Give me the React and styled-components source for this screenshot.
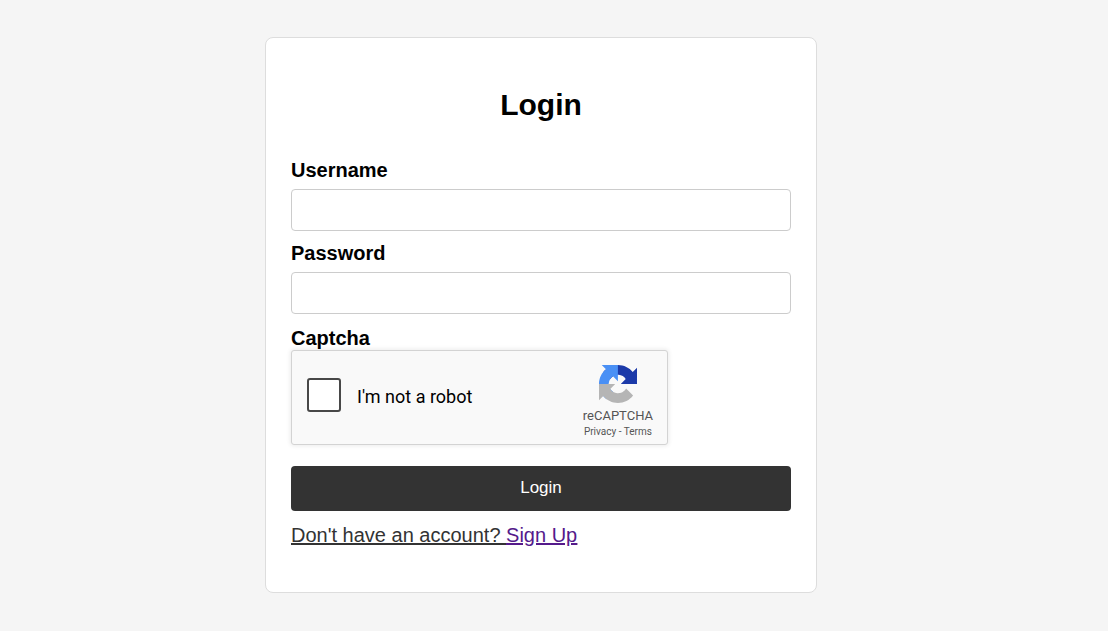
import React from "react";
import styled, { createGlobalStyle } from "styled-components";

const GlobalStyle = createGlobalStyle`
  *, *::before, *::after { box-sizing: border-box; }
  body {
    margin: 0;
    background: #f5f5f5;
    color: #000;
    font-family: Arial, "Liberation Sans", sans-serif;
    font-size: 20px;
    line-height: 24px;
  }
`;

const Page = styled.main`
  display: flex;
  align-items: center;
  justify-content: center;
  min-height: 100vh;
  padding: 24px 26px 26px 0;
`;

const Card = styled.form`
  width: 100%;
  max-width: 552px;
  padding: 25px 25px 45px;
  background: #fff;
  border: 1px solid #ddd;
  border-radius: 8px;
`;

const Title = styled.h1`
  margin: 24px 0 35px;
  font-size: 30px;
  line-height: 36px;
  text-align: center;
`;

const Field = styled.div`
  display: flex;
  flex-direction: column;
  gap: 7px;
  margin-bottom: 10px;
`;

const CaptchaField = styled.div`
  margin: 12px 0 21px;
`;

const Label = styled.label`
  display: block;
  font-weight: bold;
`;

const TextInput = styled.input`
  width: 100%;
  height: 42px;
  padding: 8px 10px;
  background: #fff;
  border: 1px solid #ccc;
  border-radius: 4px;
  font: inherit;
`;

const Captcha = styled.div`
  display: flex;
  align-items: stretch;
  justify-content: space-between;
  max-width: 377px;
  height: 95px;
  padding: 0 14px 0 15px;
  background: #f9f9f9;
  border: 1px solid #d3d3d3;
  border-radius: 3px;
  box-shadow: 0 0 4px 1px rgba(0, 0, 0, 0.08);
  font-family: Roboto, sans-serif;
`;

const CaptchaCheck = styled.div`
  display: flex;
  align-items: center;
  gap: 16px;
`;

const CheckBox = styled.input`
  appearance: none;
  width: 34px;
  height: 34px;
  margin: 0 0 4px;
  background: #fff;
  border: 2px solid #484848;
  border-radius: 3px;
`;

const CheckLabel = styled.label`
  font-size: 18px;
`;

const CaptchaBrand = styled.div`
  display: flex;
  flex-direction: column;
  align-items: center;
  padding-top: 14px;
  color: #555;
  font-size: 13px;
  line-height: 16px;
`;

const BrandLogo = styled.svg`
  width: 38px;
  height: 38px;
  margin-bottom: 5px;
`;

const Legal = styled.div`
  font-size: 10px;
`;

const LegalLink = styled.a`
  color: inherit;
  text-decoration: none;
`;

const SubmitButton = styled.button`
  display: block;
  width: 100%;
  height: 45px;
  background: #333;
  border: 0;
  border-radius: 4px;
  color: #fff;
  font-family: inherit;
  font-size: 17px;
  cursor: pointer;
`;

const SignUpText = styled.p`
  margin: 12px 0 0;
  color: #333;
  text-decoration: underline;
`;

const SignUpLink = styled.a`
  color: #551a8b;
`;

function RecaptchaLogo() {
  return (
    <BrandLogo viewBox="0 0 64 64" aria-hidden="true">
      <path
        fill="#1c3aa9"
        d="M64 31.955l-.033-1.37V4.687l-7.16 7.16C50.948 4.674 42.033.093 32.05.093c-10.4 0-19.622 4.96-25.458 12.64l11.736 11.86a15.55 15.55 0 0 1 4.754-5.334c2.05-1.6 4.952-2.906 8.968-2.906.485 0 .86.057 1.135.163 4.976.393 9.288 3.14 11.828 7.124l-8.307 8.307L64 31.953"
      />
      <path
        fill="#4a90f5"
        d="M31.862.094l-1.37.033H4.594l7.16 7.16C4.58 13.147 0 22.06 0 32.046c0 10.4 4.96 19.622 12.64 25.458L24.5 45.768a15.55 15.55 0 0 1-5.334-4.754c-1.6-2.05-2.906-4.952-2.906-8.968 0-.485.057-.86.163-1.135.393-4.976 3.14-9.288 7.124-11.828l8.307 8.307L31.86.095"
      />
      <path
        fill="#b5b5b5"
        d="M.001 32.045l.033 1.37v25.898l7.16-7.16c5.86 7.173 14.774 11.754 24.76 11.754 10.4 0 19.622-4.96 25.458-12.64l-11.736-11.86a15.55 15.55 0 0 1-4.754 5.334c-2.05 1.6-4.952 2.906-8.968 2.906-.485 0-.86-.057-1.135-.163-4.976-.393-9.288-3.14-11.828-7.124l8.307-8.307c-10.522.04-22.4.066-27.295-.005"
      />
    </BrandLogo>
  );
}

export default function App() {
  return (
    <>
      <GlobalStyle />
      <Page>
        <Card onSubmit={(event) => event.preventDefault()}>
          <Title>Login</Title>
          <Field>
            <Label htmlFor="username">Username</Label>
            <TextInput id="username" type="text" autoComplete="username" />
          </Field>
          <Field>
            <Label htmlFor="password">Password</Label>
            <TextInput id="password" type="password" autoComplete="current-password" />
          </Field>
          <CaptchaField>
            <Label htmlFor="captcha">Captcha</Label>
            <Captcha>
              <CaptchaCheck>
                <CheckBox id="captcha" type="checkbox" />
                <CheckLabel htmlFor="captcha">I'm not a robot</CheckLabel>
              </CaptchaCheck>
              <CaptchaBrand>
                <RecaptchaLogo />
                <span>reCAPTCHA</span>
                <Legal>
                  <LegalLink href="#privacy">Privacy</LegalLink> - <LegalLink href="#terms">Terms</LegalLink>
                </Legal>
              </CaptchaBrand>
            </Captcha>
          </CaptchaField>
          <SubmitButton type="submit">Login</SubmitButton>
          <SignUpText>
            Don't have an account? <SignUpLink href="#signup">Sign Up</SignUpLink>
          </SignUpText>
        </Card>
      </Page>
    </>
  );
}
